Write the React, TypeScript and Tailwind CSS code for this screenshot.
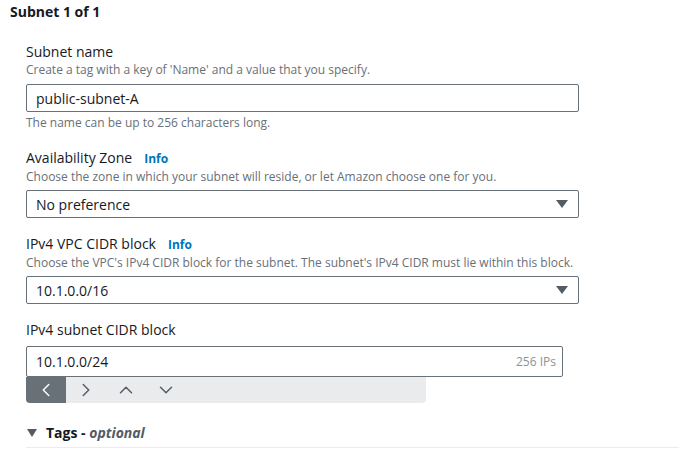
import { ChevronLeft, ChevronRight, ChevronUp, ChevronDown } from "lucide-react";

type FieldProps = {
  label: string;
  info?: boolean;
  description?: string;
};

function FieldHeader({ label, info, description }: FieldProps) {
  return (
    <div>
      <div className="flex items-baseline text-[14px] leading-[20px] text-[#16191f]">
        <span>{label}</span>
        {info && (
          <span className="ml-[12px] text-[12px] font-bold text-[#0073bb]">Info</span>
        )}
      </div>
      {description && (
        <div className="text-[12px] leading-[16px] text-[#687078]">{description}</div>
      )}
    </div>
  );
}

function Caret() {
  return (
    <svg width="12" height="8" viewBox="0 0 12 8" className="text-[#545b64]">
      <path d="M0 0h12L6 8z" fill="currentColor" />
    </svg>
  );
}

function SelectBox({ value }: { value: string }) {
  return (
    <div className="flex h-[28px] w-[553px] items-center justify-between rounded-[2px] border border-[#687078] pl-[9px] pr-[10px] text-[14px] text-[#16191f]">
      <span>{value}</span>
      <Caret />
    </div>
  );
}

export default function App() {
  return (
    <div className="h-[460px] overflow-hidden bg-white font-['Open_Sans',sans-serif]">
      <div className="pl-[10px] pt-[2px] text-[14px] font-bold leading-[20px] text-[#16191f]">
        Subnet 1 of 1
      </div>

      <div className="pl-[26px]">
        {/* Subnet name */}
        <div className="mt-[20px]">
          <FieldHeader
            label="Subnet name"
            description="Create a tag with a key of 'Name' and a value that you specify."
          />
          <div className="mt-[6px] flex h-[28px] w-[553px] items-center rounded-[2px] border border-[#687078] pl-[9px] text-[14px] text-[#16191f]">
            public-subnet-A
          </div>
          <div className="mt-[3px] text-[12px] leading-[16px] text-[#687078]">
            The name can be up to 256 characters long.
          </div>
        </div>

        {/* Availability Zone */}
        <div className="mt-[17px]">
          <FieldHeader
            label="Availability Zone"
            info
            description="Choose the zone in which your subnet will reside, or let Amazon choose one for you."
          />
          <div className="mt-[5px]">
            <SelectBox value="No preference" />
          </div>
        </div>

        {/* VPC CIDR */}
        <div className="mt-[16px]">
          <FieldHeader
            label="IPv4 VPC CIDR block"
            info
            description="Choose the VPC's IPv4 CIDR block for the subnet. The subnet's IPv4 CIDR must lie within this block."
          />
          <div className="mt-[5px]">
            <SelectBox value="10.1.0.0/16" />
          </div>
        </div>

        {/* Subnet CIDR */}
        <div className="mt-[16px]">
          <FieldHeader label="IPv4 subnet CIDR block" />
          <div className="mt-[6px] flex h-[31px] w-[537px] items-center justify-between rounded-[2px] border border-[#687078] pl-[9px] pr-[6px] text-[14px] text-[#16191f]">
            <span>10.1.0.0/24</span>
            <span className="text-[12px] text-[#879596]">256 IPs</span>
          </div>
          <div className="flex h-[26px] w-[400px] rounded-b-[4px] bg-[#e9ebed] text-[#545b64]">
            <div className="flex w-[40px] items-center justify-center rounded-bl-[4px] bg-[#687078] text-white">
              <ChevronLeft size={22} strokeWidth={1.6} />
            </div>
            <div className="flex w-[40px] items-center justify-center">
              <ChevronRight size={22} strokeWidth={1.6} />
            </div>
            <div className="flex w-[40px] items-center justify-center">
              <ChevronUp size={22} strokeWidth={1.6} />
            </div>
            <div className="flex w-[40px] items-center justify-center">
              <ChevronDown size={22} strokeWidth={1.6} />
            </div>
          </div>
        </div>

        {/* Tags */}
        <div className="mt-[20px] flex items-center text-[14px] font-bold leading-[20px] text-[#16191f]">
          <svg width="10" height="8" viewBox="0 0 10 8" className="ml-[1px] text-[#545b64]">
            <path d="M0 0h10L5 8z" fill="currentColor" />
          </svg>
          <span className="ml-[9px]">
            Tags - <i className="text-[#545b64]">optional</i>
          </span>
        </div>
        <div className="mt-[4px] border-t border-[#eaeded]" />
        <div className="mt-[8px] flex text-[14px] leading-[20px] text-[#16191f]">
          <span className="w-[285px]">Key</span>
          <span>
            Value - <i>optional</i>
          </span>
        </div>
      </div>
    </div>
  );
}
